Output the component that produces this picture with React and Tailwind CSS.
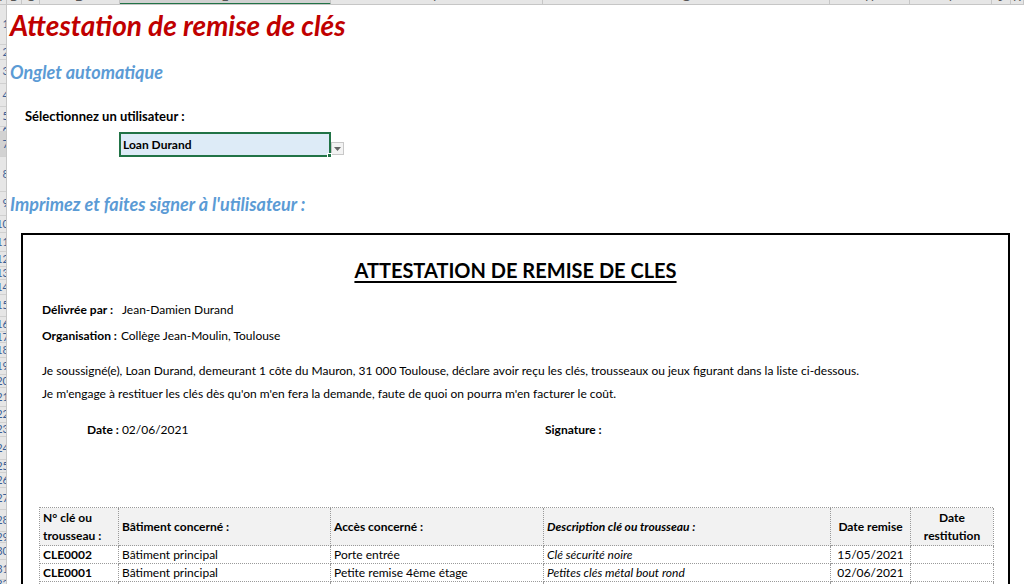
import React from "react";

const columns = [
  { w: 7, label: "A" },
  { w: 15, label: "B" },
  { w: 18, label: "C" },
  { w: 80, label: "D" },
  { w: 211, label: "E", selected: true },
  { w: 212, label: "F" },
  { w: 287, label: "G" },
  { w: 80, label: "H" },
  { w: 82, label: "I" },
  { w: 19, label: "J" },
  { w: 13, label: "K" },
];

const rowHeights = [40, 15, 24, 23, 20, 5, 25, 35, 24, 17, 19, 15, 13, 15, 22, 15, 11, 15, 17, 13, 19, 16, 14, 23, 13, 15, 22, 22, 11, 17, 20, 10];

const keys = [
  { id: "CLE0002", bat: "Bâtiment principal", acces: "Porte entrée", desc: "Clé sécurité noire", remise: "15/05/2021" },
  { id: "CLE0001", bat: "Bâtiment principal", acces: "Petite remise 4ème étage", desc: "Petites clés métal bout rond", remise: "02/06/2021" },
  { id: "", bat: "", acces: "", desc: "", remise: "" },
];

const cell = "border-r border-b border-dotted border-[#9a9a9a] px-[3px]";

function ColumnHeader() {
  return (
    <div className="flex h-[5px] overflow-hidden bg-[#e6e6e6] border-b border-[#c6c6c6]">
      {columns.map((c) => (
        <div
          key={c.label}
          style={{ width: c.w }}
          className={`shrink-0 h-[5px] overflow-hidden border-r border-[#c6c6c6] ${c.selected ? "bg-[#d2d2d2] border-b-2 border-b-[#217346]" : ""}`}
        >
          <div className="-mt-[10px] text-center text-[12px] leading-[14px] text-[#555]">{c.label}</div>
        </div>
      ))}
    </div>
  );
}

function RowHeader() {
  return (
    <div className="w-[7px] shrink-0 overflow-hidden bg-[#e6e6e6] border-r border-[#c6c6c6]">
      {rowHeights.map((h, i) => (
        <div
          key={i}
          style={{ height: h }}
          className={`flex items-center justify-end overflow-hidden border-b border-[#d0d0d0] text-[11px] text-[#3a5f96] ${i === 6 ? "bg-[#d2d2d2]" : ""}`}
        >
          <span className="shrink-0 -mr-[3px]">{i + 1}</span>
        </div>
      ))}
    </div>
  );
}

function Dropdown() {
  return (
    <div className="flex h-[25px] items-start pl-[112px]">
      <div className="relative w-[212px] h-[25px] bg-[#ddebf7] border-2 border-[#217346] flex items-center pl-[2px] text-[12px] font-bold text-black">
        Loan Durand
        <div className="absolute -right-[3px] -bottom-[3px] w-[5px] h-[5px] bg-[#217346] border border-white" />
      </div>
      <div className="mt-[10px] w-[13px] h-[13px] bg-[#f3f3f3] border border-[#c8c8c8] flex items-center justify-center">
        <svg width="7" height="4" viewBox="0 0 7 4">
          <path d="M0 0 L7 0 L3.5 4 Z" fill="#666" />
        </svg>
      </div>
    </div>
  );
}

function KeyTable() {
  return (
    <div className="ml-[16px] w-[954px] border-l border-t border-dotted border-[#9a9a9a] text-[12px] text-black">
      <div className="grid grid-cols-[79px_212px_213px_287px_80px_83px] bg-[#f2f2f2] font-bold">
        <div className={`${cell} h-[38px] flex flex-col justify-center leading-[18px]`}>
          <span>N° clé ou</span>
          <span>trousseau :</span>
        </div>
        <div className={`${cell} flex items-center`}>Bâtiment concerné :</div>
        <div className={`${cell} flex items-center`}>Accès concerné :</div>
        <div className={`${cell} flex items-center italic`}>Description clé ou trousseau :</div>
        <div className={`${cell} flex items-center justify-center`}>Date remise</div>
        <div className={`${cell} flex flex-col items-center justify-center leading-[18px]`}>
          <span>Date</span>
          <span>restitution</span>
        </div>
      </div>
      {keys.map((k, i) => (
        <div key={i} className="grid grid-cols-[79px_212px_213px_287px_80px_83px] h-[18px] leading-[17px]">
          <div className={`${cell} font-bold`}>{k.id}</div>
          <div className={cell}>{k.bat}</div>
          <div className={cell}>{k.acces}</div>
          <div className={`${cell} italic`}>{k.desc}</div>
          <div className={`${cell} text-center`}>{k.remise}</div>
          <div className={cell}></div>
        </div>
      ))}
    </div>
  );
}

function Attestation() {
  return (
    <div className="ml-[14px] w-[989px] h-[400px] border-2 border-black text-[12px] text-black">
      <div className="pt-[20px] h-[50px] flex justify-center">
        <h2 className="text-[20px] leading-[30px] font-bold underline underline-offset-[3px]">ATTESTATION DE REMISE DE CLES</h2>
      </div>
      <div className="pl-[19px]">
        <div className="mt-[15px] h-[20px] flex items-center">
          <span className="font-bold">Délivrée par :</span>
          <span className="ml-[9px]">Jean-Damien Durand</span>
        </div>
        <div className="mt-[6px] h-[20px] flex items-center">
          <span className="font-bold">Organisation :</span>
          <span className="ml-[4px]">Collège Jean-Moulin, Toulouse</span>
        </div>
        <div className="mt-[15px] h-[20px] flex items-center">
          Je soussigné(e), Loan Durand, demeurant 1 côte du Mauron, 31 000 Toulouse, déclare avoir reçu les clés, trousseaux ou jeux figurant dans la liste ci-dessous.
        </div>
        <div className="mt-[3px] h-[20px] flex items-center">
          Je m'engage à restituer les clés dès qu'on m'en fera la demande, faute de quoi on pourra m'en facturer le coût.
        </div>
        <div className="mt-[16px] h-[20px] flex items-center">
          <div className="w-[503px] pl-[45px]">
            <span className="font-bold">Date :</span> 02/06/2021
          </div>
          <span className="font-bold">Signature :</span>
        </div>
      </div>
      <div className="mt-[67px]">
        <KeyTable />
      </div>
    </div>
  );
}

export default function App() {
  return (
    <div className="w-[1024px] h-[584px] overflow-hidden bg-white font-['Lato','Liberation_Sans',sans-serif]">
      <ColumnHeader />
      <div className="flex">
        <RowHeader />
        <div className="flex-1">
          <div className="h-[40px] flex items-center pl-[3px]">
            <h1 className="text-[28px] font-bold italic text-[#c00000]">Attestation de remise de clés</h1>
          </div>
          <div className="mt-[15px] h-[24px] flex items-center pl-[3px]">
            <h3 className="text-[18px] font-bold italic text-[#5b9bd5]">Onglet automatique</h3>
          </div>
          <div className="mt-[23px] h-[20px] flex items-center pl-[18px] text-[13px] font-bold text-black">
            Sélectionnez un utilisateur :
          </div>
          <div className="mt-[5px]">
            <Dropdown />
          </div>
          <div className="mt-[35px] h-[24px] flex items-center pl-[3px]">
            <h3 className="text-[18px] font-bold italic text-[#5b9bd5]">Imprimez et faites signer à l'utilisateur :</h3>
          </div>
          <div className="mt-[17px]">
            <Attestation />
          </div>
        </div>
      </div>
    </div>
  );
}
